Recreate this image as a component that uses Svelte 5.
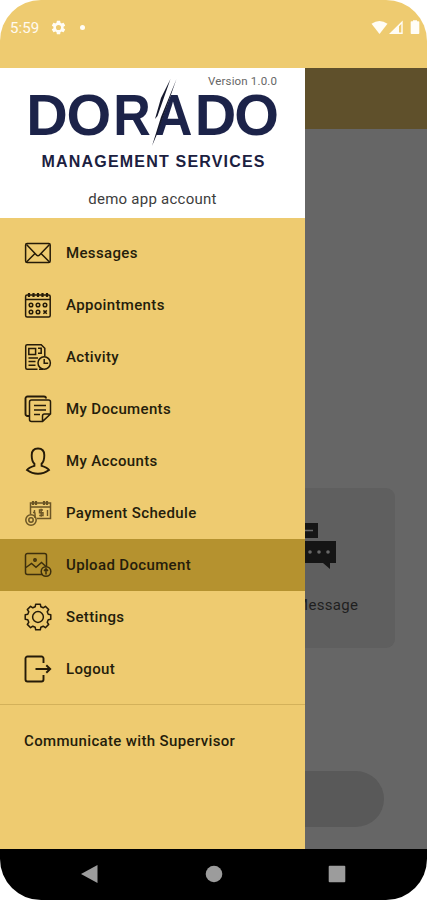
<script lang="ts">
  interface MenuItem {
    icon: string;
    label: string;
  }

  const items: MenuItem[] = [
    { icon: "mail", label: "Messages" },
    { icon: "calendar", label: "Appointments" },
    { icon: "activity", label: "Activity" },
    { icon: "documents", label: "My Documents" },
    { icon: "profile", label: "My Accounts" },
    { icon: "payment", label: "Payment Schedule" },
    { icon: "upload", label: "Upload Document" },
    { icon: "settings", label: "Settings" },
    { icon: "logout", label: "Logout" },
  ];

  let selected = $state("upload");

  // Outline of the eight-toothed settings gear
  function gearPath(cx: number, cy: number, outer: number, inner: number) {
    const points: string[] = [];
    for (let i = 0; i < 8; i++) {
      const mid = (i * Math.PI) / 4 - Math.PI / 2;
      const corners = [[-0.27, inner], [-0.18, outer], [0.18, outer], [0.27, inner]];
      for (const [offset, r] of corners) {
        points.push(`${(cx + Math.cos(mid + offset) * r).toFixed(2)} ${(cy + Math.sin(mid + offset) * r).toFixed(2)}`);
      }
    }
    return `M${points.join("L")}Z`;
  }
</script>

{#snippet icon(name: string)}
  <svg class="icon {name}" viewBox="0 0 28 28" aria-hidden="true">
    {#if name === "mail"}
      <rect x="1.6" y="4.6" width="24.6" height="19" rx="1.5" />
      <path d="M2.5 5.5 12.5 16q1.5 1.5 3 0L25.5 5.5M2.5 23l8.5-8.5M25.5 23 17 14.5" />
    {:else if name === "calendar"}
      <rect x="1.6" y="4" width="24.6" height="22" rx="1.5" />
      <path d="M2 8.5h24" />
      <path stroke-width="2.2" d="M5 2v4M9.500 2v4M14 2v4M18.500 2v4M23 2v4" />
      <circle cx="7" cy="14" r="1.8" />
      <circle cx="14" cy="14" r="1.8" />
      <circle cx="21" cy="14" r="1.8" />
      <circle cx="7" cy="21" r="1.8" />
      <circle cx="14" cy="21" r="1.8" />
      <path d="m19.400 19.400 3.400 3.400M22.800 19.400l-3.400 3.400" />
    {:else if name === "activity"}
      <path d="M13.500 26.200H3.200a1.500 1.500 0 0 1-1.500-1.500V3.200a1.500 1.500 0 0 1 1.500-1.500h14l3.600 3.600v8M15 26.200h4" />
      <path d="M4.800 5.500h6.800v6H4.800zM14 5.200h3.200v5H14M4.500 15h9.500M4.500 18.600h7M4.500 22.200h7" />
      <circle cx="20.2" cy="20" r="6.2" />
      <path d="M20.200 16v4.300h4" />
    {:else if name === "documents"}
      <path stroke-width="1.9" d="M5 21H3.500a2 2 0 0 1-2-2V3.500a2 2 0 0 1 2-2H20a2 2 0 0 1 2 2" />
      <path d="M18.600 26.400H7.500a2 2 0 0 1-2-2V7a2 2 0 0 1 2-2H24.500a2 2 0 0 1 2 2v12zM26.500 19h-6a2 2 0 0 0-2 2v5.400" />
      <path stroke-width="1.3" d="M10 10.500h12M10 15h12M10 19.500h6" />
    {:else if name === "profile"}
      <path stroke-width="1.9" d="M7.700 8.200C7.700 3.600 10.200 1.500 14 1.500s6.300 2.100 6.300 6.700c0 4-.9 7-2.700 8.500v2.100c2.700.8 5.800 1.800 7.400 4.300-3.500 2.500-7 3.700-11 3.700s-7.500-1.200-11-3.700c1.600-2.500 4.700-3.500 7.400-4.300v-2.100c-1.800-1.500-2.700-4.500-2.700-8.500z" />
    {:else if name === "payment"}
      <path d="M6.500 15V4h20v15.500H13M6.500 8h20" />
      <path stroke-width="2.2" d="M9 6V2M12 6V2M20 6V2M23 6V2" />
      <path stroke-width="1.4" d="M19 11h-3.500v2.700H19v2.800h-3.800M17.200 9.700v8M23.500 11v6M10.500 11v3" />
      <circle cx="7" cy="21" r="5.2" />
      <circle cx="7" cy="21" r="2.2" />
      <path d="M11 19v-4q0-2-2-1.500" />
    {:else if name === "upload"}
      <path d="M19 23.500H3.500a2 2 0 0 1-2-2v-17a2 2 0 0 1 2-2h17a2 2 0 0 1 2 2V16" />
      <path d="m2 16.500 5.500-4L12 16.300l5.500-4.800 5 4.500" />
      <circle cx="11" cy="9" r="1.2" />
      <circle cx="22" cy="20.500" r="4.800" />
      <path d="M22 23.500v-5.600m-2 2 2-2 2 2" />
    {:else if name === "settings"}
      <path stroke-linejoin="round" d={gearPath(14, 14, 13, 10.6)} />
      <circle cx="14" cy="14" r="5.4" />
    {:else if name === "logout"}
      <path stroke-width="1.9" d="M19.500 8V3.500a2 2 0 0 0-2-2H3.500a2 2 0 0 0-2 2v21a2 2 0 0 0 2 2h14a2 2 0 0 0 2-2V20M11.500 14H26M22.300 10.200 26.200 14l-3.900 3.800" />
    {/if}
  </svg>
{/snippet}

<div class="phone">
  <header class="status-bar">
    <span class="time">5:59</span>
    <svg class="gear" viewBox="0 0 24 24" aria-hidden="true">
      <path d="M19.140 12.940c.04-.3.060-.61.060-.94 0-.32-.020-.64-.070-.94l2.030-1.580a.49.49 0 0 0 .12-.61l-1.920-3.320a.488.488 0 0 0-.59-.22l-2.390.96c-.5-.38-1.030-.7-1.620-.94l-.36-2.540a.484.484 0 0 0-.48-.41h-3.840c-.24 0-.43.17-.47.41l-.36 2.540c-.59.24-1.130.57-1.620.94l-2.390-.96c-.22-.08-.47 0-.59.22L2.740 8.870c-.12.21-.08.47.12.61l2.030 1.580c-.05.3-.09.63-.09.94s.02.64.07.94l-2.030 1.580a.49.49 0 0 0-.12.61l1.920 3.320c.12.22.37.29.59.22l2.390-.96c.5.38 1.030.7 1.620.94l.36 2.540c.05.24.24.41.48.41h3.840c.24 0 .44-.17.47-.41l.36-2.540c.59-.24 1.130-.56 1.620-.94l2.390.96c.22.08.47 0 .59-.22l1.920-3.320c.12-.22.07-.47-.12-.61zM12 15.600A3.600 3.600 0 1 1 12 8.400a3.600 3.600 0 0 1 0 7.200z" />
    </svg>
    <span class="dot"></span>
    <svg class="signals" viewBox="0 0 50 16" aria-hidden="true">
      <path d="M.5 3.800Q8.500-2 16.500 3.800L8.500 14z" />
      <path d="M18 14 31.700.5V14zM28 6.300V12.600h2.300V4z" fill-rule="evenodd" />
      <path d="M40.500 1.200h1.500V.3h4v.9h1.500q.8 0 .8.800v11.200q0 .8-.8.800h-7q-.8 0-.8-.8V2q0-.8.800-.8z" />
    </svg>
  </header>

  <main class="screen">
    <div class="app-bar"></div>
    <div class="content">
      <section class="card">
        <svg class="chat" viewBox="0 0 60 50" aria-hidden="true">
          <path d="M0 0h42v15H0z" />
          <path d="M20 18h40v22h-6v6l-7-6H20z" />
          <path class="line" d="M10 7.500h27" />
          <g class="mark">
            <circle cx="34" cy="29" r="1.8" />
            <circle cx="43" cy="29" r="1.8" />
            <circle cx="52" cy="29" r="1.8" />
          </g>
        </svg>
        <span>Message</span>
      </section>
      <div class="pill"></div>
    </div>

    <aside class="drawer">
      <div class="brand">
        <svg class="logo" viewBox="0 0 305 110" role="img" aria-label="Dorado Management Services">
          <text class="version" x="208" y="17" textLength="69">Version 1.0.0</text>
          <text class="name" x="26.2 66.5" y="67.3">DO</text>
          <text class="name" x="113.3" y="67.3" textLength="37.5" lengthAdjust="spacingAndGlyphs">R</text>
          <text class="name" x="153.5" y="67.3" textLength="39" lengthAdjust="spacingAndGlyphs">A</text>
          <text class="name" x="194.800 234.200" y="67.3">DO</text>
          <path class="gap" d="M170 14 151.500 58v16l3.500-4L169 32l7-18z" />
          <path class="slash" d="m170.500 11-9.500 19-6 21 2.500-3zM176.500 11 161 49l-9 29 5.500-13z" />
          <text class="tagline" x="41.5" y="98.5" textLength="223">MANAGEMENT SERVICES</text>
        </svg>
        <span class="account">demo app account</span>
      </div>

      <nav class="menu">
        {#each items as item (item.icon)}
          <button class="item" class:active={selected === item.icon} onclick={() => (selected = item.icon)}>
            {@render icon(item.icon)}
            <span>{item.label}</span>
          </button>
        {/each}
      </nav>

      <div class="supervisor">Communicate with Supervisor</div>
    </aside>
  </main>

  <footer class="nav-bar">
    <svg viewBox="0 0 18 20" aria-hidden="true"><path d="M0 10 16.500 1v18z" /></svg>
    <svg viewBox="0 0 18 20" aria-hidden="true"><circle cx="9" cy="10" r="8.3" /></svg>
    <svg viewBox="0 0 18 20" aria-hidden="true"><rect x=".7" y="1.7" width="16.6" height="16.6" rx="1" /></svg>
  </footer>
</div>

<style>
  :global(body) {
    background: #fff;
  }

  .phone {
    width: 427px;
    height: 900px;
    display: flex;
    flex-direction: column;
    font-family: Roboto, sans-serif;
  }

  .status-bar {
    box-sizing: border-box;
    height: 68px;
    display: flex;
    align-items: flex-start;
    padding: 20px 7px 0 10px;
    border-radius: 41px 41px 0 0;
    background: #eecb70;
    color: #fffaf0;
    fill: #fffdf6;
  }

  .time {
    width: 41px;
    font-size: 15px;
    line-height: 17px;
    letter-spacing: 0.1px;
  }

  .gear {
    width: 17px;
    height: 17px;
    margin: -1px 0 0 -1px;
  }

  .dot {
    width: 5px;
    height: 5px;
    margin: 5px 0 0 13px;
    border-radius: 50%;
    background: #fffdf6;
  }

  .signals {
    width: 50px;
    height: 16px;
    margin-left: auto;
    margin-right: -1px;
  }

  .screen {
    position: relative;
    flex: 1;
    background: #666;
  }

  .app-bar {
    height: 61px;
    background: #5f502b;
  }

  .content {
    display: flex;
    flex-direction: column;
    align-items: flex-end;
    padding-top: 359px;
  }

  .card {
    box-sizing: border-box;
    width: 160px;
    height: 160px;
    margin-right: 32px;
    padding: 35px 0 0 41px;
    border-radius: 9px;
    background: #5f5f5f;
    color: #1f1f1f;
    font-size: 15px;
    letter-spacing: 0.3px;
  }

  .card span {
    display: block;
    margin-top: 23px;
    margin-left: 19px;
    line-height: 18px;
  }

  .chat {
    display: block;
    width: 60px;
    height: 50px;
    fill: #151515;
  }

  .chat .line {
    stroke: #686868;
    stroke-width: 1.5;
  }

  .chat .mark {
    fill: #686868;
  }

  .pill {
    width: 341px;
    height: 56px;
    margin: 123px 43px 0 0;
    border-radius: 28px;
    background: #595959;
  }

  .drawer {
    position: absolute;
    inset: 0 auto 0 0;
    width: 305px;
    background: #eecb70;
  }

  .brand {
    height: 149.5px;
    display: flex;
    flex-direction: column;
    align-items: center;
    background: #fff;
  }

  .logo {
    width: 305px;
    height: 110px;
    flex: none;
  }

  .version {
    font-size: 11.5px;
    fill: #666;
  }

  .name {
    font: bold 57.5px "Liberation Sans", sans-serif;
    fill: #1c2349;
  }

  .gap {
    fill: #fff;
  }

  .slash {
    fill: #15182c;
  }

  .tagline {
    font: bold 16px "Liberation Sans", sans-serif;
    fill: #1b2040;
  }

  .account {
    margin-top: 12px;
    font-size: 15px;
    line-height: 18px;
    letter-spacing: 0.25px;
    color: #3d3d3d;
  }

  .menu {
    box-sizing: border-box;
    height: 487px;
    padding-top: 9px;
    border-bottom: 1px solid #d3b15a;
  }

  .item {
    width: 100%;
    height: 52.1px;
    display: flex;
    align-items: center;
    gap: 14px;
    padding: 0 24px;
    border: 0;
    background: none;
    color: #251d0b;
    font: 500 15px Roboto, sans-serif;
    letter-spacing: 0.35px;
  }

  .item.active {
    background: #b5922f;
  }

  .icon {
    width: 28px;
    height: 28px;
    fill: none;
    stroke: #251b08;
    stroke-width: 1.5;
  }

  .icon.payment {
    stroke: #6b5525;
  }

  .icon.upload {
    stroke: #3d2f0d;
  }

  .supervisor {
    padding: 27px 24px;
    font-size: 15px;
    font-weight: 500;
    line-height: 18px;
    letter-spacing: 0.35px;
    color: #251d0b;
  }

  .nav-bar {
    box-sizing: border-box;
    height: 51px;
    display: flex;
    justify-content: space-between;
    padding: 15px 81px 0 81px;
    border-radius: 0 0 41px 41px;
    background: #000;
    fill: #9c9c9c;
  }

  .nav-bar svg {
    width: 18px;
    height: 20px;
  }
</style>
